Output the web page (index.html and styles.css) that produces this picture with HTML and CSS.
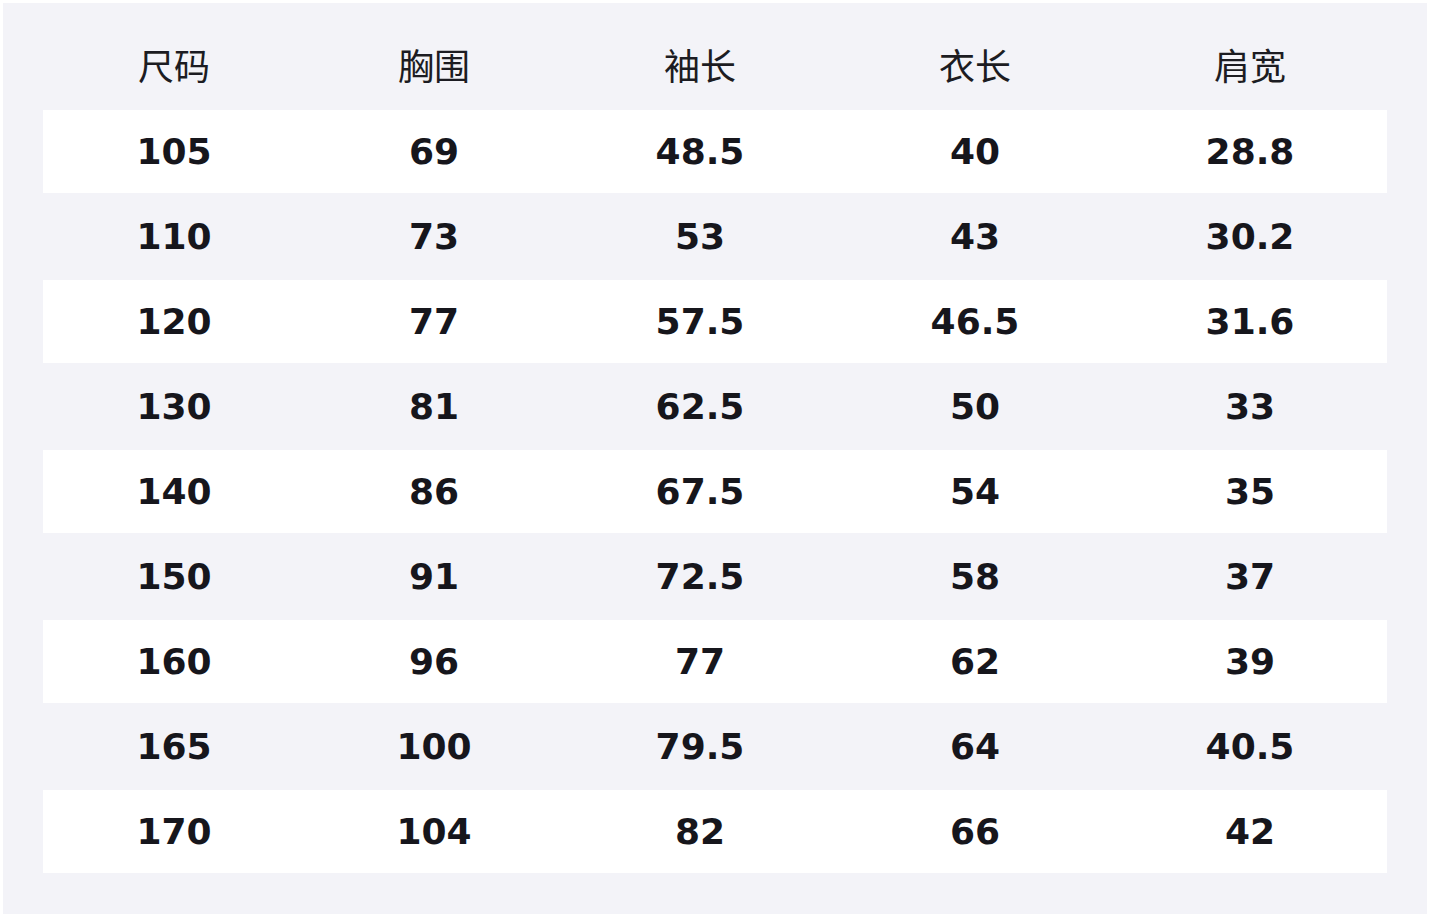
FILE: index.html
```html
<!DOCTYPE html>
<html lang="zh">
<head>
<meta charset="utf-8">
<link rel="stylesheet" href="styles.css">
</head>
<body>
<div class="panel">
  <div class="row head">
    <div>尺码</div><div>胸围</div><div>袖长</div><div>衣长</div><div>肩宽</div>
  </div>
  <div class="row odd"><div>105</div><div>69</div><div>48.5</div><div>40</div><div>28.8</div></div>
  <div class="row"><div>110</div><div>73</div><div>53</div><div>43</div><div>30.2</div></div>
  <div class="row odd"><div>120</div><div>77</div><div>57.5</div><div>46.5</div><div>31.6</div></div>
  <div class="row"><div>130</div><div>81</div><div>62.5</div><div>50</div><div>33</div></div>
  <div class="row odd"><div>140</div><div>86</div><div>67.5</div><div>54</div><div>35</div></div>
  <div class="row"><div>150</div><div>91</div><div>72.5</div><div>58</div><div>37</div></div>
  <div class="row odd"><div>160</div><div>96</div><div>77</div><div>62</div><div>39</div></div>
  <div class="row"><div>165</div><div>100</div><div>79.5</div><div>64</div><div>40.5</div></div>
  <div class="row odd"><div>170</div><div>104</div><div>82</div><div>66</div><div>42</div></div>
</div>
</body>
</html>
```
FILE: styles.css
```css
html, body {
  margin: 0;
  padding: 0;
  background: #ffffff;
}
body {
  padding: 3px;
  width: 1424px;
  font-family: "DejaVu Sans", "Noto Sans CJK SC", sans-serif;
  color: #16161c;
}
.panel {
  background: #f3f3f8;
  padding: 20px 40px 40px;
  height: 911px;
  box-sizing: border-box;
  width: 1424px;
}
.row {
  display: grid;
  grid-template-columns: 262px 258px 274px 276px 274px;
  height: 85px;
  align-items: center;
  text-align: center;
  font-size: 36px;
  font-weight: bold;
  box-sizing: border-box;
}
.row.odd {
  background: #ffffff;
  background-clip: content-box;
  padding: 1px 0;
}
.row.head {
  height: 86px;
  padding-bottom: 4px;
  font-family: "Noto Sans CJK SC", sans-serif;
  font-weight: normal;
  color: #1c1c22;
}
```
